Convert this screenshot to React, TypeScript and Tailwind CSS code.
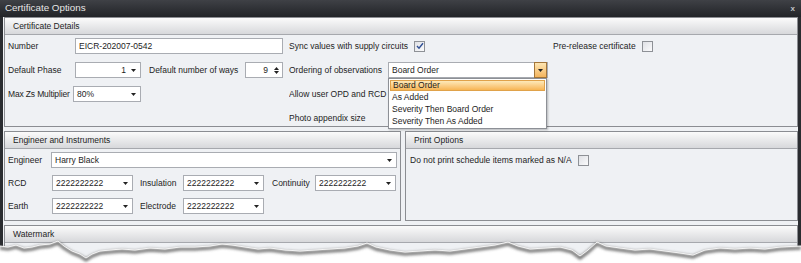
import React from "react";

const Arrow = () => (
  <svg width="5" height="3" viewBox="0 0 5 3" className="shrink-0">
    <path d="M0 0h5L2.5 3z" fill="#222" />
  </svg>
);

function TextBox({ value, className = "" }: { value: string; className?: string }) {
  return (
    <div className={`flex h-[16px] items-center border border-[#a9acb2] bg-white px-[3px] ${className}`}>
      {value}
    </div>
  );
}

function Combo({ value, className = "", right = false }: { value: string; className?: string; right?: boolean }) {
  return (
    <div className={`flex h-[16px] items-center border border-[#a9acb2] bg-white pl-[3px] pr-[4px] ${className}`}>
      <span className={`flex-1 ${right ? "text-right pr-[5px]" : ""}`}>{value}</span>
      <Arrow />
    </div>
  );
}

function Check({ checked = false }: { checked?: boolean }) {
  return (
    <span className="inline-flex h-[11px] w-[11px] shrink-0 items-center justify-center border border-[#8e9196] bg-gradient-to-br from-[#dfe1e5] to-[#fbfbfc]">
      {checked && (
        <svg width="8" height="8" viewBox="0 0 8 8">
          <path d="M1 4l2 2.2L7 1.2" stroke="#2f4f94" strokeWidth="1.4" fill="none" />
        </svg>
      )}
    </span>
  );
}

function Group({ title, className = "", children }: { title: string; className?: string; children?: React.ReactNode }) {
  return (
    <div className={`flex flex-col border border-[#8b8d92] bg-[#eff1f4] ${className}`}>
      <div className="flex h-[17px] shrink-0 items-center border-b border-[#a6a8ad] bg-gradient-to-b from-[#fbfbfb] to-[#d7d8db] pl-[8px]">
        {title}
      </div>
      {children}
    </div>
  );
}

const tear = [
  [0, 246], [8, 247], [16, 245], [24, 248], [32, 247], [40, 245], [50, 244], [58, 241], [64, 246], [72, 251],
  [80, 254], [86, 258], [92, 254], [100, 251], [110, 250], [122, 249], [135, 250], [150, 248], [165, 249],
  [180, 247], [195, 247], [210, 246], [222, 244], [232, 245], [245, 247], [258, 249], [270, 248], [285, 250],
  [300, 251], [315, 250], [330, 249], [345, 248], [358, 246], [367, 243], [376, 247], [390, 250], [405, 252],
  [420, 251], [435, 250], [450, 251], [465, 249], [480, 247], [495, 245], [508, 242], [518, 246], [530, 249],
  [545, 248], [560, 247], [572, 250], [580, 256], [588, 250], [597, 242], [606, 246], [620, 248], [635, 250],
  [650, 249], [665, 251], [680, 253], [693, 255], [705, 250], [720, 248], [735, 249], [750, 248], [765, 249],
  [780, 247], [801, 246],
];
const edge = tear.map(([x, y], i) => `${i ? "L" : "M"}${x} ${y}`).join(" ");

export default function App() {
  return (
    <div className="relative h-[263px] w-[801px] overflow-hidden whitespace-nowrap bg-white font-['Liberation_Sans',Arial,sans-serif] text-[8.5px] text-[#1d1d1d]">
      <div className="flex h-full flex-col bg-[#2a2c30]">
        {/* title bar */}
        <div className="flex h-[17px] shrink-0 items-center justify-between bg-gradient-to-b from-[#3f4146] to-[#222428] pl-[5px] pr-[6px] text-[9.8px] text-[#e6e6e6]">
          <span>Certificate Options</span>
          <span className="text-[8px] font-bold text-[#bfc1c4]">x</span>
        </div>

        <div className="mx-[3px] flex flex-1 flex-col bg-[#eff1f4] pl-[1px]">
          {/* Certificate Details */}
          <Group title="Certificate Details" className="h-[110px]">
            <div className="flex pl-[3px] pt-[3px]">
              <div className="flex w-[275px] flex-col gap-[8px]">
                <div className="flex items-center">
                  <span className="w-[67px]">Number</span>
                  <TextBox value="EICR-202007-0542" className="flex-1" />
                </div>
                <div className="flex items-center">
                  <span className="w-[67px]">Default Phase</span>
                  <Combo value="1" right className="w-[66px]" />
                  <span className="ml-[8px] w-[96px]">Default number of ways</span>
                  <div className="flex h-[16px] w-[38px] items-center border border-[#a9acb2] bg-white pr-[3px]">
                    <span className="flex-1 pr-[6px] text-right">9</span>
                    <span className="flex flex-col gap-[1px]">
                      <svg width="5" height="3" viewBox="0 0 5 3"><path d="M0 3h5L2.5 0z" fill="#222" /></svg>
                      <svg width="5" height="3" viewBox="0 0 5 3"><path d="M0 0h5L2.5 3z" fill="#222" /></svg>
                    </span>
                  </div>
                </div>
                <div className="flex items-center">
                  <span className="w-[65px] tracking-[-0.15px]">Max Zs Multiplier</span>
                  <Combo value="80%" className="w-[68px]" />
                </div>
              </div>

              <div className="ml-[6px] flex w-[259px] flex-col gap-[8px]">
                <div className="flex h-[16px] items-center gap-[6px]">
                  <span>Sync values with supply circuits</span>
                  <Check checked />
                </div>
                <div className="flex items-center">
                  <span className="w-[99px]">Ordering of observations</span>
                  <div className="relative w-[160px]">
                    <div className="flex h-[16px] items-center border border-[#a9acb2] bg-white pl-[3px]">
                      <span className="flex-1">Board Order</span>
                      <span className="flex h-[16px] w-[13px] items-center justify-center border border-[#a3763a] bg-gradient-to-b from-[#fde6b2] to-[#f3b45c]">
                        <Arrow />
                      </span>
                    </div>
                    <div className="absolute left-0 top-[16px] z-10 flex w-[159px] flex-col border border-[#8d9096] bg-white pb-[1px] shadow-[1px_1px_2px_rgba(0,0,0,0.25)]">
                      <div className="mx-[1px] mt-[1px] flex h-[11px] items-center border border-[#e0a24a] bg-gradient-to-b from-[#fde9b8] to-[#f7b552] pl-[2px]">
                        Board Order
                      </div>
                      <div className="flex h-[12px] items-center pl-[3px]">As Added</div>
                      <div className="flex h-[12px] items-center pl-[3px]">Severity Then Board Order</div>
                      <div className="flex h-[12px] items-center pl-[3px]">Severity Then As Added</div>
                    </div>
                  </div>
                </div>
                <div className="flex h-[16px] w-[99px] items-center overflow-hidden">Allow user OPD and RCD checks</div>
                <div className="flex h-[16px] items-center">Photo appendix size</div>
              </div>

              <div className="ml-[5px] flex h-[16px] items-center gap-[6px]">
                <span>Pre-release certificate</span>
                <Check />
              </div>
            </div>
          </Group>

          <div className="mt-[4px] flex h-[90px] gap-[4px]">
            {/* Engineer and Instruments */}
            <Group title="Engineer and Instruments" className="w-[397px]">
              <div className="flex flex-col gap-[7px] pl-[3px] pt-[3px]">
                <div className="flex items-center">
                  <span className="w-[43px]">Engineer</span>
                  <Combo value="Harry Black" className="w-[346px]" />
                </div>
                <div className="flex items-center">
                  <span className="w-[44px]">RCD</span>
                  <Combo value="2222222222" className="w-[81px]" />
                  <span className="ml-[7px] w-[43px]">Insulation</span>
                  <Combo value="2222222222" className="w-[81px]" />
                  <span className="ml-[8px] w-[43px]">Continuity</span>
                  <Combo value="2222222222" className="w-[81px]" />
                </div>
                <div className="flex items-center">
                  <span className="w-[44px]">Earth</span>
                  <Combo value="2222222222" className="w-[81px]" />
                  <span className="ml-[7px] w-[43px]">Electrode</span>
                  <Combo value="2222222222" className="w-[81px]" />
                </div>
              </div>
            </Group>

            {/* Print Options */}
            <Group title="Print Options" className="flex-1">
              <div className="mt-[3px] flex h-[16px] items-center gap-[6px] pl-[4px]">
                <span>Do not print schedule items marked as N/A</span>
                <Check />
              </div>
            </Group>
          </div>

          <Group title="Watermark" className="mt-[4px] h-[40px]" />
        </div>
      </div>

      {/* torn paper edge */}
      <svg className="absolute bottom-0 left-0" width="801" height="33" viewBox="0 230 801 33">
        <defs>
          <filter id="blur" x="-5%" y="-50%" width="110%" height="200%">
            <feGaussianBlur stdDeviation="1.6" />
          </filter>
        </defs>
        <path d={`${edge} L801 263 L0 263 Z`} fill="#ffffff" />
        <path d={edge} transform="translate(0 2)" stroke="#6b6b6b" strokeWidth="3" fill="none" filter="url(#blur)" />
        <path d={edge} stroke="#f4f4f4" strokeWidth="1" fill="none" />
      </svg>
    </div>
  );
}
